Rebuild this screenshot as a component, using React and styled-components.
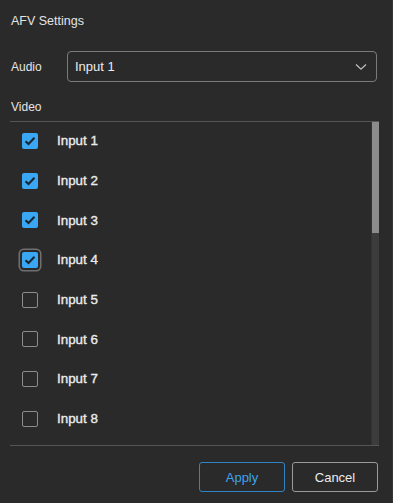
import React, { useState } from "react";
import styled, { createGlobalStyle } from "styled-components";

const Global = createGlobalStyle`
  html, body { margin: 0; padding: 0; background: #2a2a2a; }
  body { font-family: "Liberation Sans", Arial, sans-serif; }
  * { box-sizing: border-box; }
`;

const Dialog = styled.div`
  width: 393px;
  height: 503px;
  background: #2a2a2a;
  border-right: 1px solid #353535;
  display: flex;
  flex-direction: column;
  padding: 0 14px 0 10px;
  color: #e6e6e6;
`;

const Title = styled.div`
  font-size: 12.5px;
  line-height: 14px;
  color: #e4e4e4;
  padding: 14px 0 0 1px;
  height: 51px;
`;

const AudioRow = styled.div`
  display: flex;
  align-items: center;
  height: 31px;
`;

const Label = styled.div`
  font-size: 12px;
  color: #e4e4e4;
  width: 57px;
  padding-left: 1px;
`;

const Select = styled.div`
  flex: 1;
  height: 31px;
  margin-right: 1px;
  border: 1px solid #7a7a7a;
  border-radius: 4px;
  display: flex;
  align-items: center;
  justify-content: space-between;
  padding: 0 9px 0 7px;
  font-size: 13px;
  color: #ececec;
`;

const VideoLabel = styled(Label)`
  margin-top: 18px;
  height: 21px;
  line-height: 14px;
`;

const List = styled.div`
  height: 325px;
  margin-right: -1px;
  border-top: 1px solid #555;
  border-bottom: 1px solid #555;
  display: flex;
  overflow: hidden;
`;

const Items = styled.div`
  flex: 1;
  overflow: hidden;
  margin-top: -1px;
`;

const ScrollTrack = styled.div`
  width: 8px;
  background: #3c3c3c;
  border-left: 1px solid #333;
  display: flex;
  flex-direction: column;
`;

const ScrollThumb = styled.div`
  height: 111px;
  background: #8c8c8c;
`;

const Row = styled.label`
  display: flex;
  align-items: center;
  height: 39.7px;
  padding-left: 12px;
  cursor: pointer;
`;

const Box = styled.span`
  width: 16px;
  height: 16px;
  border-radius: 2px;
  flex-shrink: 0;
  display: flex;
  align-items: center;
  justify-content: center;
  background: ${(p) => (p.$checked ? "#39a7f3" : "transparent")};
  border: ${(p) => (p.$checked ? "none" : "1px solid #8c8c8c")};
  box-shadow: ${(p) => (p.$focused ? "0 0 0 2px #2a2a2a, 0 0 0 3.5px #6f6f6f" : "none")};
`;

const RowText = styled.span`
  margin-left: 19px;
  font-size: 13.4px;
  color: #ececec;
  -webkit-text-stroke: 0.35px #ececec;
`;

const Footer = styled.div`
  display: flex;
  justify-content: flex-end;
  gap: 7px;
  padding-top: 16px;
`;

const Button = styled.button`
  width: 86px;
  height: 30px;
  background: transparent;
  border-radius: 3px;
  font-family: "Liberation Sans", Arial, sans-serif;
  font-size: 13px;
  border: 1px solid ${(p) => (p.$primary ? "#2e84c4" : "#9a9a9a")};
  color: ${(p) => (p.$primary ? "#3ea3ec" : "#ececec")};
  cursor: pointer;
`;

const Check = () => (
  <svg width="12" height="10" viewBox="0 0 12 10">
    <path d="M1.5 5.2 L4.5 8 L10.5 1.8" fill="none" stroke="#1c242b" strokeWidth="2" />
  </svg>
);

const Chevron = () => (
  <svg width="12" height="8" viewBox="0 0 12 8">
    <path d="M1 1.5 L6 6.2 L11 1.5" fill="none" stroke="#bdbdbd" strokeWidth="1.3" />
  </svg>
);

export default function App() {
  const items = Array.from({ length: 8 }, (_, i) => ({
    name: `Input ${i + 1}`,
    checked: i < 4,
  }));
  const [state] = useState(items);
  return (
    <>
      <Global />
      <Dialog>
        <Title>AFV Settings</Title>
        <AudioRow>
          <Label>Audio</Label>
          <Select>
            <span>Input 1</span>
            <Chevron />
          </Select>
        </AudioRow>
        <VideoLabel>Video</VideoLabel>
        <List>
          <Items>
            {state.map((it, i) => (
              <Row key={it.name}>
                <Box $checked={it.checked} $focused={i === 3}>
                  {it.checked && <Check />}
                </Box>
                <RowText>{it.name}</RowText>
              </Row>
            ))}
          </Items>
          <ScrollTrack>
            <ScrollThumb />
          </ScrollTrack>
        </List>
        <Footer>
          <Button $primary>Apply</Button>
          <Button>Cancel</Button>
        </Footer>
      </Dialog>
    </>
  );
}
